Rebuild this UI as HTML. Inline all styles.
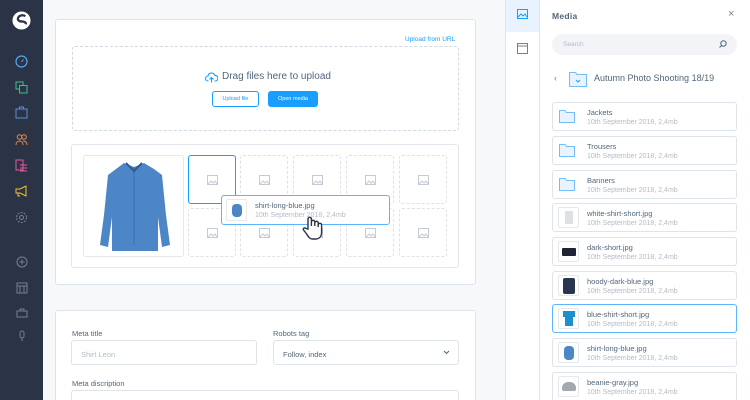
<!DOCTYPE html>
<html style="width:750px;height:400px;overflow:hidden"><head><meta charset="utf-8"><style>
*{box-sizing:border-box;margin:0;padding:0}
body{width:750px;height:400px;overflow:hidden;font-family:"Liberation Sans",sans-serif;background:#f6f8fa;position:relative;color:#52667a}
.a{position:absolute}
.sb{left:0;top:0;width:43px;height:400px;background:#2b3346}
.card{background:#fff;border:1px solid #dfe3ea;border-radius:3px}
.dash{border:1px dashed #d3d9e2;border-radius:3px}
.th{width:48px;height:49px;border:1px dashed #dde2ea;border-radius:3px}
.th svg{position:absolute;left:18px;top:19px}
.li{left:552px;width:185px;height:29px;background:#fff;border:1px solid #dfe3ea;border-radius:3px}
.li .ic{position:absolute;left:5px;top:3px;width:21px;height:21px;border:1px solid #e5e8ed;border-radius:2px}
.li .n{position:absolute;left:34px;top:5px;font-size:7.5px;color:#52667a}
.li .d{position:absolute;left:34px;top:16px;font-size:7px;color:#b3bcc7}
.lab{font-size:7.5px;color:#52667a}
.inp{border:1px solid #dfe3ea;border-radius:3px;background:#fff;font-size:7.5px;color:#b3bcc7;padding:9px 9px}
</style></head><body>
<div class="a sb">
<svg class="a" style="left:12px;top:11px" width="19" height="19" viewBox="0 0 20 20"><circle cx="10" cy="10" r="9.5" fill="#fff"/><path d="M14 5.5C12 4 8 4 6.5 7 5.5 9.5 7.5 11 10 11 13 11 15 12 14.5 14" stroke="#2b3346" stroke-width="2.4" fill="none"/></svg>
<svg class="a" style="left:15px;top:55px" width="13" height="13"><circle cx="6.5" cy="6.5" r="5.5" stroke="#5aa6ea" fill="none" stroke-width="1.2"/><path d="M6.5 7L8.5 4.5" stroke="#5aa6ea"/></svg>
<svg class="a" style="left:15px;top:81px" width="13" height="13"><rect x="1" y="1" width="7" height="7" stroke="#3ec18e" fill="none"/><rect x="4.5" y="4.5" width="7.5" height="7.5" stroke="#3ec18e" fill="#2b3346"/></svg>
<svg class="a" style="left:15px;top:106px" width="13" height="13"><rect x="1" y="3" width="11" height="9" stroke="#5a8fd8" fill="none"/><path d="M4.5 3V1h4v2" stroke="#5a8fd8" fill="none"/></svg>
<svg class="a" style="left:15px;top:133px" width="13" height="13"><circle cx="4.5" cy="4" r="2.3" stroke="#e5884a" fill="none"/><circle cx="9" cy="4" r="2.3" stroke="#e5884a" fill="none"/><path d="M1 12c0-3 2-4 3.5-4s3.5 1 3.5 4M8 8c2 0 4 1 4 4" stroke="#e5884a" fill="none"/></svg>
<svg class="a" style="left:15px;top:159px" width="13" height="13"><path d="M1 1h7v10H1zM5 6h7M5 9h7M5 12h7" stroke="#e5599e" fill="none"/></svg>
<svg class="a" style="left:15px;top:185px" width="13" height="13"><path d="M1 4h4l6-3v10l-6-3H1zM3 8v3h2" stroke="#f2c22c" fill="none"/></svg>
<svg class="a" style="left:15px;top:211px" width="13" height="13"><circle cx="6.5" cy="6.5" r="2" stroke="#758095" fill="none"/><circle cx="6.5" cy="6.5" r="5" stroke="#758095" fill="none" stroke-dasharray="2 1.2"/></svg>
<svg class="a" style="left:16px;top:256px" width="12" height="12"><circle cx="6" cy="6" r="5" stroke="#758095" fill="none"/><path d="M6 3.5v5M3.5 6h5" stroke="#758095"/></svg>
<svg class="a" style="left:16px;top:282px" width="12" height="12"><rect x="1" y="1" width="10" height="10" stroke="#758095" fill="none"/><path d="M1 4h10M4 4v7M8 4v7" stroke="#758095"/></svg>
<svg class="a" style="left:16px;top:307px" width="12" height="12"><rect x="1" y="4" width="10" height="6" stroke="#758095" fill="none"/><path d="M4 4V2h4v2" stroke="#758095" fill="none"/></svg>
<svg class="a" style="left:16px;top:330px" width="12" height="12"><rect x="4" y="1" width="4" height="7" rx="2" stroke="#758095" fill="none"/><path d="M6 8v3" stroke="#758095"/></svg>
</div>

<div class="a card" style="left:55px;top:19px;width:421px;height:266px"></div>
<div class="a" style="left:405px;top:36px;font-size:6.5px;color:#189eff">Upload from URL</div>
<div class="a dash" style="left:72px;top:46px;width:387px;height:85px"></div>
<svg class="a" style="left:205px;top:72px" width="13" height="11"><path d="M3.5 9H3a2.5 2.5 0 010-5 3.5 3.5 0 016.8-.5A2.5 2.5 0 0110.5 9H9.5M6.5 10.5V5.5M4.5 7.5l2-2 2 2" stroke="#189eff" fill="none" stroke-width="1.1"/></svg>
<div class="a" style="left:222px;top:71px;font-size:10px;color:#52667a">Drag files here to upload</div>
<div class="a" style="left:212px;top:91px;width:47px;height:16px;border:1px solid #189eff;border-radius:3px;font-size:5.5px;color:#189eff;text-align:center;line-height:14px">Upload file</div>
<div class="a" style="left:268px;top:91px;width:50px;height:16px;background:#189eff;border-radius:3px;font-size:5.5px;color:#fff;text-align:center;line-height:16px">Open media</div>

<div class="a" style="left:71px;top:144px;width:388px;height:124px;border:1px solid #e3e7ed;border-radius:3px"></div>
<div class="a" style="left:83px;top:155px;width:101px;height:102px;border:1px solid #e5e8ed;border-radius:3px;background:#fff"></div>
<svg class="a" style="left:96px;top:161px" width="76" height="90" viewBox="0 0 76 90"><path d="M28 2l10 4 10-4 10 6 8 6 4 40 4 30-8 2-4-30 0 34H16l0-34-4 30-8-2 4-30 4-40 8-6z" fill="#4d86c6"/><path d="M38 6v78" stroke="#3c6fae" stroke-width="1"/><path d="M30 2l8 8 8-8" stroke="#2f5a8f" fill="none" stroke-width="2"/></svg>
<div class="a th" style="left:188px;top:155px;border:1px solid #189eff"><svg width="11" height="10"><rect x=".5" y=".5" width="10" height="9" stroke="#c4cbd4" fill="none"/><path d="M1 9l3-3 2 2 2-2 2 3" stroke="#c4cbd4" fill="none"/></svg></div>
<div class="a th" style="left:240px;top:155px"><svg width="11" height="10"><rect x=".5" y=".5" width="10" height="9" stroke="#c4cbd4" fill="none"/><path d="M1 9l3-3 2 2 2-2 2 3" stroke="#c4cbd4" fill="none"/></svg></div>
<div class="a th" style="left:293px;top:155px"><svg width="11" height="10"><rect x=".5" y=".5" width="10" height="9" stroke="#c4cbd4" fill="none"/><path d="M1 9l3-3 2 2 2-2 2 3" stroke="#c4cbd4" fill="none"/></svg></div>
<div class="a th" style="left:346px;top:155px"><svg width="11" height="10"><rect x=".5" y=".5" width="10" height="9" stroke="#c4cbd4" fill="none"/><path d="M1 9l3-3 2 2 2-2 2 3" stroke="#c4cbd4" fill="none"/></svg></div>
<div class="a th" style="left:399px;top:155px"><svg width="11" height="10"><rect x=".5" y=".5" width="10" height="9" stroke="#c4cbd4" fill="none"/><path d="M1 9l3-3 2 2 2-2 2 3" stroke="#c4cbd4" fill="none"/></svg></div>
<div class="a th" style="left:188px;top:208px"><svg width="11" height="10"><rect x=".5" y=".5" width="10" height="9" stroke="#c4cbd4" fill="none"/><path d="M1 9l3-3 2 2 2-2 2 3" stroke="#c4cbd4" fill="none"/></svg></div>
<div class="a th" style="left:240px;top:208px"><svg width="11" height="10"><rect x=".5" y=".5" width="10" height="9" stroke="#c4cbd4" fill="none"/><path d="M1 9l3-3 2 2 2-2 2 3" stroke="#c4cbd4" fill="none"/></svg></div>
<div class="a th" style="left:293px;top:208px"><svg width="11" height="10"><rect x=".5" y=".5" width="10" height="9" stroke="#c4cbd4" fill="none"/><path d="M1 9l3-3 2 2 2-2 2 3" stroke="#c4cbd4" fill="none"/></svg></div>
<div class="a th" style="left:346px;top:208px"><svg width="11" height="10"><rect x=".5" y=".5" width="10" height="9" stroke="#c4cbd4" fill="none"/><path d="M1 9l3-3 2 2 2-2 2 3" stroke="#c4cbd4" fill="none"/></svg></div>
<div class="a th" style="left:399px;top:208px"><svg width="11" height="10"><rect x=".5" y=".5" width="10" height="9" stroke="#c4cbd4" fill="none"/><path d="M1 9l3-3 2 2 2-2 2 3" stroke="#c4cbd4" fill="none"/></svg></div>

<div class="a" style="left:221px;top:195px;width:169px;height:30px;background:#fff;border:1px solid #5cb4ff;border-radius:3px">
<div class="a" style="left:4px;top:3px;width:21px;height:22px;border:1px solid #e5e8ed;border-radius:2px"><div class="a" style="left:5px;top:4px;width:10px;height:13px;background:#4d86c6;border-radius:4px"></div></div>
<div class="a" style="left:33px;top:5px;font-size:7.5px;color:#52667a">shirt-long-blue.jpg</div>
<div class="a" style="left:33px;top:16px;font-size:7px;color:#b3bcc7">10th September 2018, 2,4mb</div>
</div>
<svg class="a" style="left:302px;top:215px" width="22" height="25" viewBox="0 0 22 25"><path d="M6 14V4a1.7 1.7 0 013.4 0v7V7a1.7 1.7 0 013.4 0v4-3a1.7 1.7 0 013.4 0v4-2a1.7 1.7 0 013.4 0v7c0 4-2 7-6 7h-3c-3 0-4-2-6-5l-3-4c-1-1.5 1-3 2.4-1.5z" fill="#fff" stroke="#2b3346" stroke-width="1.4"/></svg>

<div class="a card" style="left:55px;top:310px;width:421px;height:95px"></div>
<div class="a lab" style="left:72px;top:329px">Meta title</div>
<div class="a inp" style="left:71px;top:340px;width:186px;height:25px">Shirt Leon</div>
<div class="a lab" style="left:273px;top:329px">Robots tag</div>
<div class="a inp" style="left:273px;top:340px;width:186px;height:25px;color:#52667a">Follow, index</div>
<svg class="a" style="left:443px;top:350px" width="7" height="5"><path d="M1 1l2.5 2.5L6 1" stroke="#52667a" fill="none"/></svg>
<div class="a lab" style="left:72px;top:379px">Meta discription</div>
<div class="a inp" style="left:71px;top:390px;width:388px;height:12px;border-bottom:none"></div>

<div class="a" style="left:505px;top:0;width:35px;height:400px;background:#fff;border-left:1px solid #dfe3ea;border-right:1px solid #dfe3ea"></div>
<div class="a" style="left:506px;top:0;width:33px;height:32px;background:#e8f3ff"></div>
<svg class="a" style="left:517px;top:9px" width="11" height="10"><rect x=".5" y=".5" width="10" height="9" stroke="#189eff" fill="none"/><path d="M1 8l3-3 2 2 2-2 2 3" stroke="#189eff" fill="none"/></svg>
<svg class="a" style="left:517px;top:43px" width="11" height="11"><rect x=".5" y=".5" width="10" height="10" stroke="#758095" fill="none"/><path d="M.5 3h10" stroke="#758095"/></svg>
<div class="a" style="left:540px;top:0;width:210px;height:400px;background:#fff"></div>
<div class="a" style="left:552px;top:11px;font-size:8.5px;font-weight:bold;color:#52667a;letter-spacing:.3px">Media</div>
<div class="a" style="left:728px;top:8px;font-size:11px;color:#758095">×</div>
<div class="a" style="left:552px;top:34px;width:185px;height:21px;background:#f2f4f7;border-radius:11px"></div>
<div class="a" style="left:563px;top:41px;font-size:6.5px;color:#b3bcc7">Search</div>
<svg class="a" style="left:719px;top:40px" width="8" height="8"><circle cx="4.5" cy="3.5" r="2.7" stroke="#52667a" fill="none"/><path d="M2.5 5.5L.5 7.5" stroke="#52667a"/></svg>
<div class="a" style="left:554px;top:73px;font-size:9px;color:#758095">‹</div>
<svg class="a" style="left:569px;top:71px" width="18" height="16"><path d="M.5 1.5h6l1.5 2h9.5v12H.5z" fill="#e8f3ff" stroke="#74bdf5"/><path d="M7 9l2 2 2-2" stroke="#189eff" fill="none"/></svg>
<div class="a" style="left:594px;top:73px;font-size:9px;color:#52667a">Autumn Photo Shooting 18/19</div>

<div class="a li" style="top:102px"><svg class="a" style="left:6px;top:7px" width="16" height="13"><path d="M.5 .5h5.5l1.5 2h8v10H.5z" fill="#e8f3ff" stroke="#74bdf5"/></svg><div class="n">Jackets</div><div class="d">10th September 2018, 2,4mb</div></div>
<div class="a li" style="top:136px"><svg class="a" style="left:6px;top:7px" width="16" height="13"><path d="M.5 .5h5.5l1.5 2h8v10H.5z" fill="#e8f3ff" stroke="#74bdf5"/></svg><div class="n">Trousers</div><div class="d">10th September 2018, 2,4mb</div></div>
<div class="a li" style="top:170px"><svg class="a" style="left:6px;top:7px" width="16" height="13"><path d="M.5 .5h5.5l1.5 2h8v10H.5z" fill="#e8f3ff" stroke="#74bdf5"/></svg><div class="n">Banners</div><div class="d">10th September 2018, 2,4mb</div></div>
<div class="a li" style="top:203px"><div class="ic"><div class="a" style="left:6px;top:3px;width:8px;height:13px;background:#dde0e5"></div></div><div class="n">white-shirt-short.jpg</div><div class="d">10th September 2018, 2,4mb</div></div>
<div class="a li" style="top:237px"><div class="ic"><div class="a" style="left:3px;top:6px;width:14px;height:8px;background:#1f2433;border-radius:1px"></div></div><div class="n">dark-short.jpg</div><div class="d">10th September 2018, 2,4mb</div></div>
<div class="a li" style="top:271px"><div class="ic"><div class="a" style="left:4px;top:2px;width:12px;height:16px;background:#2a3550;border-radius:2px"></div></div><div class="n">hoody-dark-blue.jpg</div><div class="d">10th September 2018, 2,4mb</div></div>
<div class="a li" style="top:304px;border-color:#5cb4ff"><div class="ic"><div class="a" style="left:4px;top:2px;width:12px;height:6px;background:#1a90d0"></div><div class="a" style="left:6px;top:5px;width:8px;height:12px;background:#1a90d0"></div></div><div class="n">blue-shirt-short.jpg</div><div class="d">10th September 2018, 2,4mb</div></div>
<div class="a li" style="top:338px"><div class="ic"><div class="a" style="left:5px;top:3px;width:10px;height:14px;background:#4d86c6;border-radius:4px"></div></div><div class="n">shirt-long-blue.jpg</div><div class="d">10th September 2018, 2,4mb</div></div>
<div class="a li" style="top:372px;height:28px;border-bottom:none;border-radius:3px 3px 0 0"><div class="ic"><div class="a" style="left:3px;top:5px;width:14px;height:9px;background:#a4a9b1;border-radius:6px 6px 2px 2px"></div></div><div class="n">beanie-gray.jpg</div><div class="d">10th September 2018, 2,4mb</div></div>
</body></html>
